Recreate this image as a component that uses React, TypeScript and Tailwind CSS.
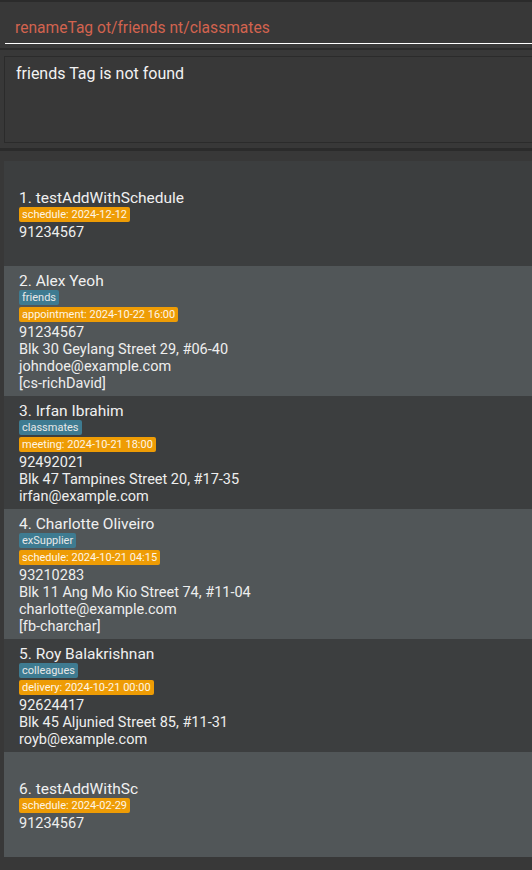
type Person = {
  name: string
  tags: string[]
  event: string
  phone: string
  address?: string
  email?: string
  social?: string
}

const people: Person[] = [
  { name: 'testAddWithSchedule', tags: [], event: 'schedule: 2024-12-12', phone: '91234567' },
  {
    name: 'Alex Yeoh',
    tags: ['friends'],
    event: 'appointment: 2024-10-22 16:00',
    phone: '91234567',
    address: 'Blk 30 Geylang Street 29, #06-40',
    email: 'johndoe@example.com',
    social: '[cs-richDavid]',
  },
  {
    name: 'Irfan Ibrahim',
    tags: ['classmates'],
    event: 'meeting: 2024-10-21 18:00',
    phone: '92492021',
    address: 'Blk 47 Tampines Street 20, #17-35',
    email: 'irfan@example.com',
  },
  {
    name: 'Charlotte Oliveiro',
    tags: ['exSupplier'],
    event: 'schedule: 2024-10-21 04:15',
    phone: '93210283',
    address: 'Blk 11 Ang Mo Kio Street 74, #11-04',
    email: 'charlotte@example.com',
    social: '[fb-charchar]',
  },
  {
    name: 'Roy Balakrishnan',
    tags: ['colleagues'],
    event: 'delivery: 2024-10-21 00:00',
    phone: '92624417',
    address: 'Blk 45 Aljunied Street 85, #11-31',
    email: 'royb@example.com',
  },
  { name: 'testAddWithSc', tags: [], event: 'schedule: 2024-02-29', phone: '91234567' },
]

function PersonCard({ person, index }: { person: Person; index: number }) {
  const odd = index % 2 === 1
  const detail = 'h-[17px] text-[14.5px] leading-[19px] text-[#eeeeee]'
  return (
    <div
      className={`flex min-h-[105px] flex-col justify-center pb-[5px] pl-[15px] pt-[6px] ${
        odd ? 'bg-[#515658]' : 'bg-[#3c3e3f]'
      }`}
    >
      <div className="h-[17px] text-[15.5px] leading-[19px] text-[#f0f0f0]">
        {index + 1}. {person.name}
      </div>
      {person.tags.map((t) => (
        <div key={t} className="flex h-[17px] items-center">
          <span className="rounded-[2px] bg-[#3e7b91] px-[3px] text-[11px] leading-[15px] text-[#e8e8e8]">
            {t}
          </span>
        </div>
      ))}
      <div className="flex h-[17px] items-center">
        <span className="rounded-[2px] bg-[#ee9c05] px-[3px] text-[11px] leading-[15px] text-[#fff6e6]">
          {person.event}
        </span>
      </div>
      <div className={detail}>{person.phone}</div>
      {person.address && <div className={detail}>{person.address}</div>}
      {person.email && <div className={detail}>{person.email}</div>}
      {person.social && <div className={detail}>{person.social}</div>}
    </div>
  )
}

export default function App() {
  return (
    <div className="h-[870px] w-[532px] overflow-hidden bg-[#383838] font-['Roboto',sans-serif]">
      {/* Command box */}
      <div className="h-[2px] bg-[#2b2b2b]" />
      <div className="h-[46px] pl-[5px] pt-[16px]">
        <div className="h-[26px] border-b border-white pl-[10px] text-[15.6px] leading-[20px] text-[#d2634f]">
          renameTag ot/friends nt/classmates
        </div>
      </div>
      <div className="h-[2px] bg-[#2b2b2b]" />

      {/* Result display */}
      <div className="h-[98px] pl-[4px] pt-[6px]">
        <div className="h-[87px] border border-r-0 border-[#2b2b2b] pl-[11px] pt-[6px] text-[16px] leading-[22px] text-[#f2f2f2]">
          friends Tag is not found
        </div>
      </div>
      <div className="h-[3px] bg-[#2b2b2b]" />

      {/* Person list */}
      <div className="pl-[4px] pt-[10px]">
        {people.map((p, i) => (
          <PersonCard key={i} person={p} index={i} />
        ))}
      </div>
    </div>
  )
}
